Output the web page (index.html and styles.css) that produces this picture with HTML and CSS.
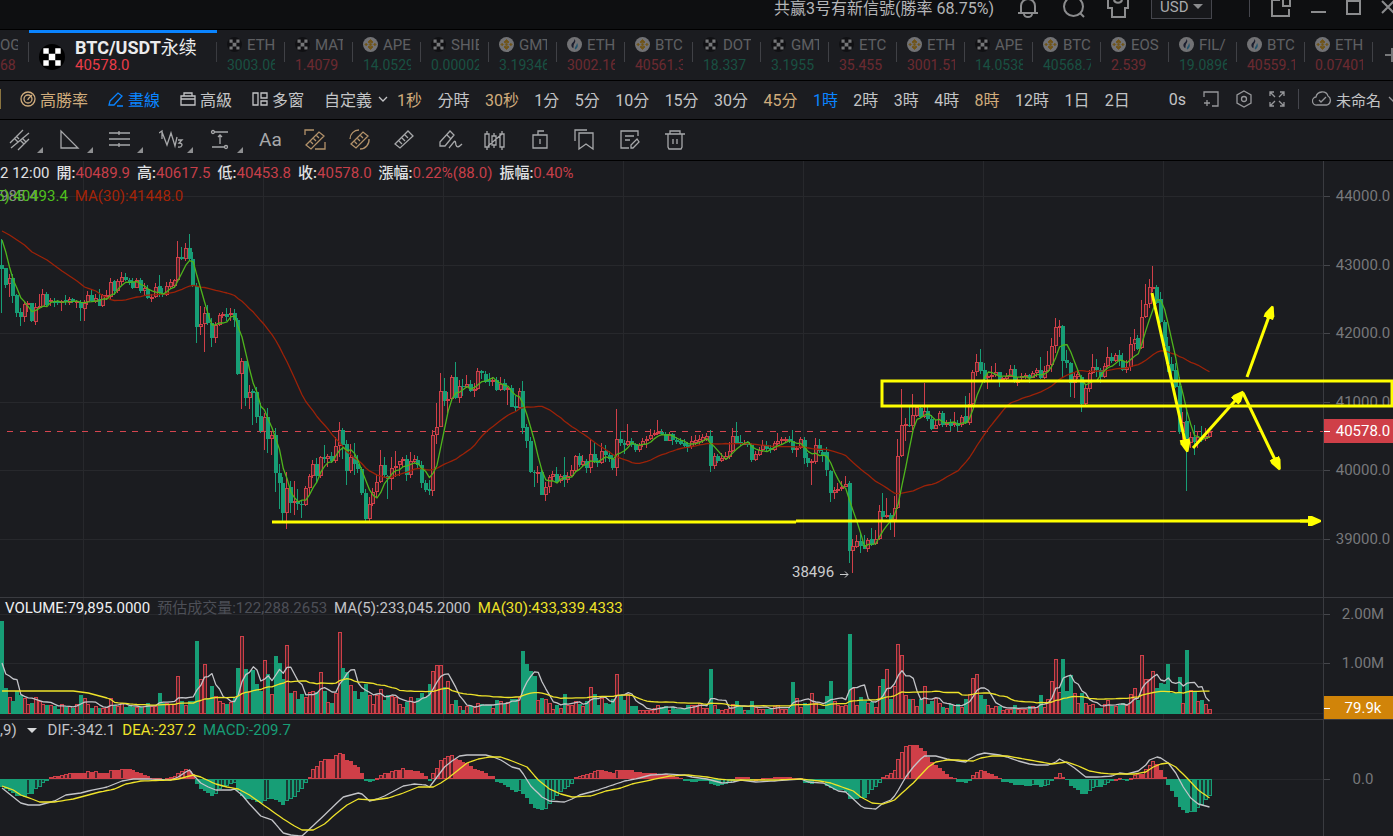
FILE: index.html
```html
<!DOCTYPE html>
<html lang="zh-Hant">
<head>
    <meta charset="UTF-8">
    <meta name="viewport" content="width=device-width, initial-scale=1.0">
    <title>BTC/USDT永续 40578.0</title>
    <link rel="stylesheet" href="styles.css">
</head>
<body>
    <!-- shared icons -->
    <svg class="sprite" aria-hidden="true">
        <symbol id="okx" viewBox="0 0 24 24">
            <circle cx="12" cy="12" r="12" fill="#000"/>
            <path d="M4 4h5v5H4zM15 4h5v5h-5zM9 9h6v6H9zM4 15h5v5H4zM15 15h5v5h-5z" fill="#fff"/>
        </symbol>
        <symbol id="bnb" viewBox="0 0 24 24">
            <circle cx="12" cy="12" r="12" fill="#f4f4f4"/>
            <path d="M12 4l4 4-2 2-2-2-2 2-2-2zM5 10l2 2-2 2-2-2zM19 10l2 2-2 2-2-2zM12 10l2 2-2 2-2-2zM8 16l2-2 2 2 2-2 2 2-4 4z" fill="#f0a90c" stroke="#f0a90c"/>
        </symbol>
        <symbol id="huobi" viewBox="0 0 24 24">
            <circle cx="12" cy="12" r="12" fill="#f4f4f4"/>
            <path d="M12 3c3 4 0 6-1 9-1 2 0 4-1 6-3-2-4-5-2-8 2-2 4-4 4-7z" fill="#1b2143"/>
            <path d="M16 9c2 4 2 8-3 11-2-4 3-6 3-11z" fill="#2ca6e0"/>
        </symbol>
    </svg>

    <header class="topbar">
        <span class="notice">共赢3号有新信號(勝率 68.75%)</span>
        <button class="icon-btn bell" aria-label="通知"><svg width="22" height="24" viewBox="0 0 22 24"><path d="M4 17v-6a7 7 0 0 1 14 0v6M1 18h20M7 19a4 3 0 0 0 8 0"/></svg></button>
        <button class="icon-btn search" aria-label="搜尋"><svg width="24" height="24" viewBox="0 0 24 24"><circle cx="11.500" cy="11.500" r="9.500"/><path d="M18 18l4 4"/></svg></button>
        <button class="icon-btn shirt" aria-label="主題"><svg width="24" height="24" viewBox="0 0 24 24"><path d="M2 4h6c0 5 8 5 8 0h6v9h-3v9H6v-9H2z"/></svg></button>
        <label class="currency"><select aria-label="貨幣"><option>USD</option></select></label>
        <span class="divider"></span>
        <button class="icon-btn popout" aria-label="彈出"><svg width="20" height="22" viewBox="0 0 20 22"><path d="M9 4H1v16h17v-7M12 3v7h7V3"/></svg></button>
        <button class="icon-btn min" aria-label="最小化"><svg width="16" height="20" viewBox="0 0 16 20"><path d="M0 15h15"/></svg></button>
        <button class="icon-btn max" aria-label="最大化"><svg width="16" height="20" viewBox="0 0 16 20"><path d="M1 4h13v13H1z"/></svg></button>
        <button class="icon-btn close" aria-label="關閉"><svg width="14" height="20" viewBox="0 0 14 20"><path d="M1 4l12 12M13 4L1 16"/></svg></button>
    </header>

    <nav class="tabs" id="tabs">
        <button class="tab tab-cut"><span class="tab-name">OG</span><span class="tab-price down">68</span></button>
        <button class="tab tab-active">
            <svg width="26" height="26"><use href="#okx"/></svg>
            <span class="pair"><b>BTC/USDT<i>永续</i></b><em>40578.0</em></span>
        </button>
        <!-- the other tabs are added by chart.js -->
    </nav>

    <div class="toolbar">
        <span class="edge"></span>
        <button class="tool gold"><svg width="16" height="16" viewBox="0 0 16 16"><circle cx="8" cy="8" r="7"/><circle cx="8" cy="8" r="4"/><path d="M8 8l4-4M8 8v1"/></svg>高勝率</button>
        <button class="tool blue"><svg width="16" height="16" viewBox="0 0 16 16"><path d="M2 10l8-8 4 3-8 9H1zM9 15h6"/></svg>畫線</button>
        <button class="tool"><svg width="16" height="16" viewBox="0 0 16 16"><path d="M1 5h14v9H1zM4 5V2h8v3M1 8h14"/></svg>高級</button>
        <button class="tool"><svg width="16" height="16" viewBox="0 0 16 16"><path d="M1 2h5v12H1zM9 2h6v5H9zM9 10h6v4H9z"/></svg>多窗</button>
        <button class="custom">自定義<svg width="10" height="6" viewBox="0 0 10 6"><path d="M1 1l4 4 4-4"/></svg></button>
        <div class="periods">
            <button class="gold">1秒</button><button>分時</button><button class="gold">30秒</button><button>1分</button><button>5分</button><button>10分</button><button>15分</button><button>30分</button><button class="gold">45分</button><button class="blue">1時</button><button>2時</button><button>3時</button><button>4時</button><button class="gold">8時</button><button>12時</button><button>1日</button><button>2日</button>
        </div>
        <div class="tools-right">
            <span>0s</span>
            <button aria-label="新增視窗"><svg width="16" height="16" viewBox="0 0 16 16"><path d="M1 6V1h14v14H9M4 9v6M1 12h6"/></svg></button>
            <button aria-label="設定"><svg width="16" height="18" viewBox="0 0 16 18"><path d="M8 1l7 4v8l-7 4-7-4V5z"/><circle cx="8" cy="9" r="2.500"/></svg></button>
            <button aria-label="全螢幕"><svg width="16" height="16" viewBox="0 0 16 16"><path d="M1 5V1h4M1 1l5 5M11 1h4v4M15 1l-5 5M1 11v4h4M1 15l5-5M11 15h4v-4M15 15l-5-5"/></svg></button>
            <span class="divider"></span>
            <button class="cloud"><svg width="20" height="16" viewBox="0 0 20 16"><path d="M5 14a4 4 0 0 1-1-8c1-6 10-7 12-1a5 5 0 0 1-1 9zM7 9l2 2 5-5"/></svg>未命名<svg class="more" width="10" height="6" viewBox="0 0 10 6"><path d="M1 1l4 4 4-4"/></svg></button>
        </div>
    </div>

    <div class="draw-tools">
        <button class="has-menu" aria-label="平行線"><svg width="22" height="22" viewBox="0 0 22 22"><path d="M1 14L14 1M2 19L20 4M9 21l11-11M5 9l4 4M7 7l3 3M11 11l4 4M13 9l4 4"/></svg></button>
        <button class="has-menu" aria-label="形狀"><svg width="22" height="22" viewBox="0 0 22 22"><path d="M2 2v17h17z"/></svg></button>
        <button class="has-menu" aria-label="水平線"><svg width="22" height="22" viewBox="0 0 22 22"><path d="M0 4h21M0 10h21M0 16h21M10 2v4M10 14v4"/></svg></button>
        <button class="has-menu" aria-label="波浪"><svg width="26" height="22" viewBox="0 0 26 22"><path d="M0 4l3-2v8M3 3l5 13 4-12 4 13 2-9M19 11h4l-3 3c5 0 3 5-1 4"/></svg></button>
        <button class="has-menu" aria-label="測量"><svg width="22" height="22" viewBox="0 0 22 22"><path d="M6 3h13M3 18h13M11 15V6M9 8l2-2 2 2"/><circle cx="4" cy="3" r="1.500"/><circle cx="17" cy="18" r="1.500"/></svg></button>
        <button class="text-tool">Aa</button>
        <button class="gold" aria-label="矩形量尺"><svg width="22" height="22" viewBox="0 0 22 22"><path d="M1 6V1h9M21 13v7H11M2 16L15 3l5 4L7 20zM6 12l3 3M9 9l3 3M12 6l3 3"/></svg></button>
        <button class="gold" aria-label="圓形量尺"><svg width="22" height="22" viewBox="0 0 22 22"><path d="M1 10a9 9 0 0 1 9-9M20 10a9 9 0 0 1-9 10M2 15L14 3l5 4L7 19zM5 12l3 3M8 9l3 3M11 6l3 3"/></svg></button>
        <button aria-label="量尺"><svg width="22" height="22" viewBox="0 0 22 22"><path d="M1 15L14 2l5 5L6 19zM5 12l3 3M8 9l3 3M11 6l3 3"/></svg></button>
        <button aria-label="畫筆"><svg width="24" height="22" viewBox="0 0 24 22"><path d="M1 13L11 2l4 4L6 17H1zM8 6l4 4M10 19c7-9 6-8 7-3 1 3 3 2 6-1"/></svg></button>
        <button aria-label="隱藏"><svg width="22" height="22" viewBox="0 0 22 22"><path d="M1 5h4v13H1zM8 7h4v9H8zM16 5h4v13h-4zM3 2v3M3 18v3M10 4v3M10 16v3M18 2v3M18 18v3M4 17L18 5"/></svg></button>
        <button aria-label="鎖定"><svg width="22" height="22" viewBox="0 0 22 22"><path d="M4 6h14v13H4zM9 6V2h6M11 10v5"/></svg></button>
        <button aria-label="書籤"><svg width="22" height="22" viewBox="0 0 22 22"><path d="M1 12V1h12M5 4h14v16l-7-5-7 5z"/></svg></button>
        <button aria-label="筆記"><svg width="22" height="22" viewBox="0 0 22 22"><path d="M19 7V2H2v17h8M6 7h9M6 11h5M12 19v-3l6-6 2 3-6 6z"/></svg></button>
        <button aria-label="刪除"><svg width="22" height="22" viewBox="0 0 22 22"><path d="M1 5h20M6 5V2h10v3M4 5v13l1 2h12l1-2V5M9 10v5M13 10v5"/></svg></button>
    </div>

    <main class="chart">
        <section class="panel price">
            <svg class="plot" id="price"></svg>
            <svg class="axis" id="price-axis"></svg>
            <div class="legend">
                <p><b>2 12:00</b><span><b>開:</b><i>40489.9</i></span><span><b>高:</b><i>40617.5</i></span><span><b>低:</b><i>40453.8</i></span><span><b>收:</b><i>40578.0</i></span><span><b>漲幅:</b><i>0.22%(88.0)</i></span><span><b>振幅:</b><i>0.40%</i></span></p>
            </div>
            <span class="ma-old">985.4</span>
            <div class="legend ma-line"><p><span class="ma5">5):40493.4</span><span class="ma30">MA(30):41448.0</span></p></div>
            <svg class="drawings">
                <defs>
                    <marker id="head" markerUnits="userSpaceOnUse" markerWidth="14" markerHeight="12" refX="11" refY="6" orient="auto"><path d="M0 1l4 0 9 4v2l-9 4h-4z" fill="#ff0"/></marker>
                </defs>
                <path d="M272 361h524M796 360h513" />
                <path d="M1300 360h19" marker-end="url(#head)"/>
                <rect x="882" y="220" width="510" height="25"/>
                <path d="M1152 132l35 157" marker-end="url(#head)"/>
                <path d="M1193 287l49-55" marker-end="url(#head)"/>
                <path d="M1243 232l36 75" marker-end="url(#head)"/>
                <path d="M1247 216l25-69" marker-end="url(#head)"/>
            </svg>
        </section>
        <section class="panel volume">
            <svg class="plot" id="volume"></svg>
            <svg class="axis" id="volume-axis"></svg>
            <div class="legend"><p><span class="strong">VOLUME:79,895.0000</span><span class="dim">预估成交量:122,288.2653</span><span class="grey">MA(5):233,045.2000</span><span class="yellow">MA(30):433,339.4333</span></p></div>
        </section>
        <section class="panel macd">
            <svg class="plot" id="macd"></svg>
            <svg class="axis" id="macd-axis"></svg>
            <div class="legend"><p><span class="grey">,9)</span><span class="caret"></span><span class="grey">DIF:-342.1</span><span class="yellow">DEA:-237.2</span><span class="green">MACD:-209.7</span></p></div>
        </section>
    </main>
    <script src="chart.js"></script>
</body>
</html>
```
FILE: styles.css
```css
* {
    box-sizing: border-box;
}

body {
    margin: 0;
    height: 100vh;
    display: flex;
    flex-direction: column;
    overflow: hidden;
    background: #1b1c20;
    color: #c3c4c6;
    font-family: Roboto, "Noto Sans CJK TC", sans-serif;
    font-size: 16px;
}

button {
    padding: 0;
    border: 0;
    background: none;
    color: inherit;
    font: inherit;
    white-space: nowrap;
    cursor: pointer;
}

svg {
    display: block;
    flex: none;
    fill: none;
    stroke: currentColor;
    stroke-width: 1.3;
}

i, em {
    font-style: normal;
}

.sprite {
    position: absolute;
    width: 0;
    height: 0;
}

use, symbol {
    stroke: none;
}

.gold { color: #d0ac7c; }
.blue { color: #0a84ff; }

/* window bar */
.topbar {
    flex: none;
    display: flex;
    align-items: center;
    height: 45px;
    margin-top: -15px;
    padding-bottom: 1px;
    background: #0e0f11;
    border-bottom: 1px solid #000;
    color: #b4b5b7;
}

.notice {
    margin-left: auto;
}

.topbar svg {
    stroke: #8b8c8e;
    stroke-width: 2;
}

.bell { margin-left: 23px; }
.search { margin-left: 23px; }
.shirt { margin-left: 20px; }

.currency {
    position: relative;
    margin: 0 37px 0 21px;
}

.currency select {
    width: 61px;
    height: 25px;
    padding: 0 0 0 8px;
    appearance: none;
    border: 1px solid #45464d;
    border-radius: 0;
    background: #17181b;
    color: #a9aaac;
    font: 15px Roboto, sans-serif;
}

.currency::after {
    content: "";
    position: absolute;
    right: 9px;
    top: 10px;
    border: 5px solid transparent;
    border-top-color: #8b8c8e;
    border-bottom: 0;
}

.divider {
    width: 1px;
    height: 20px;
    background: #45464d;
}

.popout { margin-left: 21px; }
.min { margin-left: 20px; }
.max { margin-left: 19px; }
.close { margin: 0 -2px 0 19px; }

/* symbol tabs */
.tabs {
    flex: none;
    display: flex;
    height: 51px;
    border-bottom: 1px solid #000;
    overflow: hidden;
}

.tab {
    position: relative;
    flex: none;
    width: 68px;
    padding: 0 10px 1px;
    text-align: left;
    opacity: 0.4;
}

.tab::after {
    content: "";
    position: absolute;
    right: 0;
    top: 12px;
    width: 1px;
    height: 20px;
    background: #77787f;
}

.tab-name {
    display: flex;
    align-items: center;
    gap: 5px;
    width: 48px;
    height: 20px;
    overflow: hidden;
    font-size: 15px;
    line-height: 20px;
}

.tab-price {
    display: block;
    width: 48px;
    height: 20px;
    overflow: hidden;
    font-size: 14px;
    line-height: 20px;
}

.up { color: #179e76; }
.down { color: #e0404b; }

.tab-cut {
    width: 29px;
    padding-left: 0;
}

.tab-cut .tab-name {
    width: 18px;
}

.tab-active {
    display: flex;
    align-items: center;
    gap: 10px;
    width: 188px;
    padding: 0 10px 0 10px;
    border-top: 3px solid #0a84ff;
    opacity: 1;
}

.tab-active::after {
    top: 9px;
    background: #3a3b40;
}

.pair {
    padding-bottom: 6px;
}

.pair b {
    display: block;
    color: #ececed;
    font-size: 18px;
    line-height: 20px;
}

.pair i {
    font-family: "Noto Sans CJK SC", sans-serif;
    font-weight: 400;
}

.pair em {
    display: block;
    color: #ea3d48;
    font-size: 15px;
    line-height: 14px;
}

.add {
    flex: none;
    margin-left: 12px;
    color: #77787a;
}

.add svg {
    stroke-width: 2;
}

/* period toolbar */
.toolbar {
    flex: none;
    display: flex;
    align-items: center;
    height: 39px;
    padding-bottom: 2px;
    border-bottom: 1px solid #000;
    overflow: hidden;
}

.edge {
    width: 1px;
    height: 20px;
    margin-right: 19px;
    background: #8a7440;
}

.tool {
    display: flex;
    align-items: center;
    gap: 4px;
    margin-right: 20px;
}

.custom {
    display: flex;
    align-items: center;
    gap: 6px;
    margin-right: 9px;
}

.periods {
    flex: none;
    display: flex;
    justify-content: space-between;
    width: 733px;
}

.tools-right {
    flex: none;
    display: flex;
    align-items: center;
    gap: 17px;
    margin: 0 -5px 0 auto;
}

.tools-right .divider {
    margin: 0 -4px;
}

.tools-right svg {
    stroke: #96979a;
}

.cloud {
    display: flex;
    align-items: center;
    gap: 4px;
    font-size: 15px;
}

.cloud .more {
    margin-left: 3px;
}

/* drawing tools */
.draw-tools {
    flex: none;
    display: flex;
    align-items: center;
    gap: 23px;
    height: 41px;
    padding: 0 0 1px 9px;
    border-bottom: 1px solid #000;
    color: #a7a8aa;
}

.draw-tools button {
    flex: none;
    width: 22px;
}

.draw-tools .gold {
    color: #b3926a;
}

.draw-tools .has-menu {
    position: relative;
    margin-right: 5px;
}

.has-menu::after {
    content: "";
    position: absolute;
    left: 28px;
    bottom: -2px;
    border-left: 6px solid transparent;
    border-bottom: 6px solid #8d8e90;
}

.text-tool {
    font-size: 19px;
}

/* chart */
.chart {
    flex: 1;
    display: grid;
    grid-template-rows: 436px 122px 1fr;
    min-height: 0;
}

.panel {
    position: relative;
    display: grid;
    grid-template-columns: 1fr 70px;
    min-height: 0;
    overflow: hidden;
}

.volume, .macd {
    border-top: 1px solid #3a3b40;
}

.plot, .axis {
    width: 100%;
    height: 100%;
    stroke: none;
    overflow: hidden;
}

.axis {
    border-left: 1px solid #3a3b40;
    font-size: 15px;
}

.axis text { fill: #77787b; }
.axis .tag-text { fill: #fff; }
.grid-line { stroke: #27282c; stroke-width: 1; shape-rendering: crispEdges; }
.tick { stroke: #45464b; stroke-width: 1; shape-rendering: crispEdges; }
.tag-tick { stroke: #fff; stroke-width: 1; shape-rendering: crispEdges; }
.last-line { stroke: #d5454f; stroke-width: 1; stroke-dasharray: 6 6.5; shape-rendering: crispEdges; }
.bar-up { fill: #4c242a; stroke: #cf3f48; stroke-width: 1; shape-rendering: crispEdges; }
.bar-up-solid { fill: #cf3f48; shape-rendering: crispEdges; }
.bar-down { fill: #179e76; shape-rendering: crispEdges; }
.bar-down-hollow { fill: #1b3b35; stroke: #179e76; stroke-width: 1; shape-rendering: crispEdges; }
.line { fill: none; stroke-width: 1.3; stroke-linejoin: round; }
.line-ma5 { stroke: #4fb51d; }
.line-ma30 { stroke: #9c2208; }
.line-grey { stroke: #c3c4c8; }
.line-yellow { stroke: #efe32a; }
.low-mark { fill: #cbccce; font-size: 15px; }
.low-arrow { stroke: #cbccce; stroke-width: 1; fill: none; }

.drawings {
    position: absolute;
    inset: 0;
    width: 100%;
    height: 100%;
    stroke: #ff0;
    stroke-width: 3;
}

.drawings path, .drawings rect {
    transform: translateY(0);
}

.drawings marker path {
    stroke: none;
}

.legend {
    position: absolute;
    left: 0;
    top: 1px;
    font-size: 15px;
    line-height: 22px;
    white-space: nowrap;
}

.legend p {
    display: flex;
    gap: 7px;
    margin: 0;
}

.legend b {
    color: #e0e1e3;
    font-weight: 400;
}

.legend span b {
    font-weight: 500;
}

.legend i {
    color: #c63f49;
}

.ma-line {
    top: 24px;
    left: -4px;
}

.ma-old {
    position: absolute;
    left: 0;
    top: 24px;
    color: #8c8d90;
    font-size: 15px;
    line-height: 22px;
}

.ma5 { color: #4fc01d; }
.ma30 { color: #a52407; }

.volume .legend { left: 5px; top: -1px; }
.macd .legend { top: -1px; }
.strong { color: #eeeff1; }
.grey { color: #c3c4c8; }
.dim { color: #4d4f57; font-family: Roboto, "Noto Sans CJK SC", sans-serif; }
.legend .yellow { color: #efe32a; }
.green { color: #179e76; }

.caret {
    align-self: center;
    margin: 0 4px 0 3px;
    border: 5px solid transparent;
    border-top-color: #d6d7d9;
    border-bottom: 0;
}
```
FILE: chart.js
```js
// [name, price, direction, exchange]
const tabs = [
    ['ETH', '3003.06', 'up', 'okx'], ['MAT', '1.4079', 'down', 'okx'], ['APE', '14.0529', 'up', 'bnb'],
    ['SHIB', '0.00002', 'up', 'okx'], ['GMT', '3.19346', 'up', 'bnb'], ['ETH', '3002.16', 'down', 'huobi'],
    ['BTC', '40561.3', 'down', 'bnb'], ['DOT', '18.337', 'up', 'okx'], ['GMT', '3.1955', 'up', 'okx'],
    ['ETC', '35.455', 'down', 'okx'], ['ETH', '3001.51', 'down', 'bnb'], ['APE', '14.0538', 'up', 'okx'],
    ['BTC', '40568.7', 'up', 'bnb'], ['EOS', '2.539', 'down', 'bnb'], ['FIL/', '19.0896', 'up', 'huobi'],
    ['BTC', '40559.1', 'down', 'huobi'], ['ETH', '0.07401', 'down', 'bnb']
];

document.getElementById('tabs').insertAdjacentHTML('beforeend', tabs.map(([name, price, dir, icon]) =>
    `<button class="tab"><span class="tab-name"><svg width="15" height="15"><use href="#${icon}"/></svg>${name}</span><span class="tab-price ${dir}">${price}</span></button>`
).join('') + '<button class="add" aria-label="+"><svg width="14" height="50" viewBox="0 0 14 50"><path d="M0 25h14M7 18v14"/></svg></button>');

// one candle per item: direction, high, body top, body bottom, low
const candles = `
g239 265 269 313,g268 268 285 288,r274 278 284 297,g274 278 296 303,g294 295 313 317,g308 312 317 326,r302 304 317 322,r301 303 305 312,g303 303 321 322,r303 307 322 325,
r294 306 307 308,r289 294 307 307,g292 294 305 307,r298 300 302 306,g298 301 303 307,g300 301 303 305,r300 301 303 311,g295 300 302 305,r297 299 303 305,g298 299 302 303,
r300 301 302 308,g300 302 308 321,r300 303 309 321,r291 295 302 305,g290 295 301 302,r294 298 302 303,g289 299 306 306,r294 295 306 307,r290 295 297 300,r278 282 297 299,
g280 281 291 295,r279 281 291 293,r272 277 282 285,g273 277 280 281,g278 280 283 285,g278 282 288 289,r278 280 288 288,g278 280 291 293,r283 288 291 296,g285 289 298 299,
r294 297 298 302,r283 287 297 298,g275 286 293 297,g288 293 295 297,r282 286 295 296,r279 282 287 289,r279 280 286 287,r241 257 280 282,g247 257 259 260,r243 248 259 261,
g234 248 259 261,g252 259 286 287,g283 286 327 343,r306 324 327 335,r307 313 324 352,g305 313 323 325,g318 323 338 347,r322 325 338 343,r313 315 325 326,r312 314 315 318,
g308 314 317 321,r308 313 315 321,g309 313 320 327,g318 320 374 375,r358 361 374 409,g361 361 398 406,r385 392 398 409,g389 391 393 425,g387 392 417 423,g403 416 431 433,
r413 417 432 450,g408 417 439 453,r432 435 439 455,g428 435 473 492,g464 473 483 509,g477 483 513 521,r472 488 513 529,g481 487 503 513,r481 501 503 515,g489 502 504 510,
g500 504 505 518,r486 488 505 506,r474 476 488 495,r460 464 476 478,g458 464 476 483,r456 457 476 478,g445 457 459 463,r454 456 459 467,g452 456 461 463,r437 446 461 463,
r422 430 446 457,g428 430 445 459,g440 444 471 485,r444 457 471 473,g443 457 464 475,g455 464 469 473,g467 469 493 495,g489 493 519 521,r497 504 519 521,r488 492 504 506,
r474 482 492 498,r450 465 482 483,g457 465 475 477,g475 476 479 499,r457 468 479 490,r451 466 468 477,r461 461 465 476,r457 459 461 467,g455 459 475 481,r452 461 475 478,
r455 459 462 463,g456 460 465 468,g461 465 483 488,g480 483 490 492,g480 489 491 495,r430 435 491 496,r403 427 435 444,r373 391 427 427,g378 391 401 406,r392 399 401 413,
r375 377 399 400,g362 377 398 399,r380 386 398 403,g379 386 387 396,r375 384 387 388,g380 384 391 392,r383 389 391 397,r368 371 389 390,g370 371 373 379,g371 374 382 383,
g373 380 382 386,r377 380 382 386,g377 380 390 391,r377 384 390 391,g379 383 390 391,r387 388 390 405,g385 388 407 407,g396 406 408 411,r388 391 408 409,g381 391 428 434,
g424 427 441 448,g437 441 472 473,g470 472 473 487,r466 472 473 483,g469 472 495 495,r482 487 495 501,r475 477 487 493,r471 474 477 481,g467 474 482 483,r474 476 481 483,
g457 475 480 487,r472 476 480 483,r465 470 476 477,r455 456 471 472,g453 456 465 467,r455 461 465 467,g459 461 468 473,r439 454 468 473,g443 454 461 463,g458 461 463 467,
r443 451 463 464,g445 451 455 462,g451 455 459 462,g455 459 468 470,r409 439 468 476,g431 439 443 446,g440 443 445 454,r424 441 445 446,g438 441 445 447,g443 444 450 452,
r443 445 450 452,r438 441 445 447,r436 439 441 448,r429 435 439 440,r430 433 435 436,r420 432 433 435,g429 432 434 435,g432 434 441 441,r432 434 441 441,g433 434 440 445,
g437 440 442 444,g438 441 444 445,g439 443 446 447,g442 445 447 452,r436 441 447 449,r435 440 443 445,r435 439 442 445,r434 437 441 443,r433 436 440 441,g430 436 466 472,
r453 456 466 469,g454 456 461 463,r453 458 461 462,r452 456 459 460,r442 451 457 459,r428 436 451 452,g422 436 443 443,g435 442 443 446,r440 443 444 445,g441 442 445 447,
g443 445 460 462,r451 454 460 461,r447 450 455 456,r440 445 450 452,g441 445 449 451,g445 448 450 453,r441 443 450 451,r433 441 444 445,r437 439 441 445,r437 439 441 443,
g436 439 441 443,g430 441 450 453,r446 448 450 457,r437 439 448 449,g437 440 458 464,g453 458 463 467,r459 461 463 485,r438 445 462 464,g439 445 451 453,g450 452 456 462,
g447 452 470 476,g470 471 493 502,r487 490 493 499,r483 489 491 493,r481 487 489 491,r476 484 487 487,g481 483 551 563,r539 546 551 573,r535 541 547 548,g533 541 546 553,
g535 545 549 549,r538 540 549 552,g528 539 545 546,r530 539 544 545,r505 511 539 540,g493 511 517 520,r498 515 517 518,g513 515 522 530,r496 508 520 537,r439 456 508 509,
r389 425 456 457,r418 424 426 441,g407 425 426 427,r394 415 426 430,r406 407 416 417,g407 408 417 418,r383 411 417 418,g407 411 419 421,g415 419 429 430,r420 425 429 429,
r411 413 425 426,g411 413 425 427,r420 423 425 427,g419 423 426 431,r412 423 425 427,g420 423 426 431,r415 417 425 427,g396 416 423 424,r393 404 423 425,r370 372 404 407,
r354 362 372 376,g349 362 371 374,g363 370 379 383,r373 376 378 389,r366 375 377 380,r363 372 375 377,g372 372 380 387,r377 378 380 382,r373 376 379 381,r365 369 377 377,
g365 369 382 383,r377 381 383 386,r373 376 378 380,r373 375 377 379,g374 375 378 383,r371 373 378 378,r368 370 373 377,g357 370 378 379,r366 371 378 379,r351 365 371 372,
r338 346 365 372,r318 327 346 353,r320 326 327 337,g325 326 361 378,g350 360 363 368,g362 363 383 397,r373 376 383 398,r370 374 377 379,g375 377 404 412,r385 388 404 405,
r370 373 389 392,r354 367 373 374,g359 367 370 377,g368 370 377 383,r363 366 377 378,r347 357 366 367,g353 357 361 363,r353 355 361 362,g350 355 361 366,g353 361 370 371,
r360 367 370 373,r337 344 367 371,r329 339 344 351,g335 338 349 350,r300 317 348 349,r284 304 317 318,r279 287 304 308,r266 287 288 292,g285 287 303 304,g292 299 322 323,
g320 322 346 348,g337 346 364 372,g357 364 371 380,g363 370 387 388,g377 386 432 434,r412 422 432 440,g410 421 445 491,r432 437 443 448,g425 437 442 455,r432 437 442 448,
g426 437 438 442,r428 436 439 441,r429 432 437 438`.trim().split(/,\s*/).map(s => [s[0] === 'r', ...s.slice(1).split(' ').map(Number)]);

const volumes = `
93 26 17 13 23 19 16 10 11 17 13 10 9 9 8 5 10 7 8 6 10 19 16 10 6 8 6 6 7 16
9 8 11 7 8 7 7 7 8 11 8 8 21 11 11 10 10 38 13 9 13 13 73 35 50 16 28 18 13 11
10 12 16 46 78 45 23 44 30 23 54 40 20 58 51 35 69 21 23 15 20 17 22 23 22 42 23 12 11 21
82 46 42 29 23 15 22 30 19 10 19 25 14 19 18 17 10 7 12 17 12 16 21 17 30 43 49 49 27 33
10 14 8 4 8 8 7 11 10 9 9 6 14 13 10 12 15 15 17 63 50 43 38 14 16 15 11 5 9 6
20 9 9 13 10 8 13 27 20 9 16 11 10 15 40 18 14 20 8 8 4 4 4 4 6 9 7 8 4 7
5 5 5 9 9 9 11 6 6 45 9 5 4 5 6 10 13 7 4 4 13 7 5 5 5 5 8 9 5 5
6 32 16 7 11 10 21 11 5 5 18 33 13 9 8 9 80 26 9 17 13 11 12 7 28 35 45 15 28 70
59 19 15 15 8 15 28 10 13 16 11 7 6 10 9 10 7 15 20 36 40 19 15 9 6 8 8 4 5 5
9 5 5 5 8 8 7 19 7 15 33 55 22 55 23 39 21 11 21 11 9 10 6 6 10 14 8 8 9 11
9 20 26 14 59 35 35 43 26 31 30 50 21 21 37 11 64 24 22 13 14 10 5`.trim().split(/\s+/).map(Number);

// index:value pairs, the points between them are interpolated
const hist = '0:-8 2:-12 4:-17 6:-18 7:-15 8:-15 9:-10 10:-8 11:-4 12:-2 13:2 16:4 18:6 22:6 23:8 24:7 25:8 26:6 28:6 29:9 31:9 32:10 34:10 35:9 36:7 38:4 40:1 42:1 43:-1 44:1 46:3 47:6 49:10 50:8 51:5 52:-5 53:-10 54:-12 56:-17 57:-15 58:-10 60:-7 62:-4 63:-12 64:-17 65:-20 66:-20 69:-24 71:-20 73:-21 75:-26 76:-22 78:-18 79:-13 80:-10 81:-4 82:2 83:10 84:13 85:18 86:20 88:20 89:24 90:26 91:25 92:19 93:18 94:14 95:12 96:6 97:-2 98:-3 99:-2 100:1 102:6 103:6 104:8 106:9 107:11 108:9 111:8 113:3 114:-2 115:6 116:11 117:19 119:23 120:24 121:20 124:16 126:10 128:8 130:3 131:3 132:-3 134:-6 137:-13 138:-12 139:-15 140:-19 141:-25 142:-29 144:-31 145:-30 146:-25 149:-13 152:-5 153:2 157:6 158:8 160:9 162:7 163:6 164:9 168:9 169:7 176:5 178:4 181:1 182:-2 184:-3 188:-2 189:-5 191:-7 194:-4 195:-1 196:2 199:2 200:-1 203:1 208:2 213:1 214:-4 216:-5 217:-2 219:-2 220:-7 222:-11 224:-11 225:-13 226:-20 228:-20 230:-19 234:-4 235:2 237:6 238:9 239:20 240:27 241:33 242:34 244:34 246:28 247:22 248:17 251:8 253:2 254:1 255:-3 257:-4 258:-2 259:4 261:9 262:8 266:1 267:-3 269:-4 270:-6 274:-7 276:-6 277:-8 279:-6 280:-2 281:2 282:6 283:2 284:-1 285:-7 287:-11 288:-15 289:-15 291:-9 293:-8 296:-2 298:1 299:-1 300:-2 301:1 302:4 304:5 305:10 307:18 308:15 309:9 310:2 311:-6 313:-18 314:-28 316:-34 318:-33 320:-26 322:-17';
const dif = '0:788 5:803 7:805 10:805 14:801 17:795 21:793 23:791 28:787 32:781 35:779 39:779 45:780 47:777 49:772 50:770 51:775 53:783 55:787 57:790 61:790 62:789 64:795 66:804 69:816 72:820 75:833 77:835 80:836 82:829 86:815 89:804 91:797 95:793 96:794 98:801 100:799 102:796 105:790 107:786 110:784 113:785 114:787 116:777 118:767 120:761 122:756 124:755 129:755 131:757 133:760 136:767 138:769 139:774 141:786 144:797 146:801 150:802 152:799 154:795 158:791 162:786 166:781 170:778 173:775 177:774 182:775 184:777 188:779 190:781 192:783 195:782 197:780 201:782 206:781 213:779 215:782 219:783 221:787 223:791 225:792 227:799 229:806 230:808 233:809 235:803 237:800 238:796 239:790 241:777 243:767 245:759 246:756 249:756 252:759 255:761 257:762 258:759 260:755 262:753 266:755 268:757 271:761 274:764 276:765 279:765 281:762 282:759 284:763 286:768 289:777 292:777 296:776 298:773 300:774 303:771 305:765 306:760 308:757 309:758 311:763 313:773 315:787 317:798 319:804 322:807';
const dea = '0:786 3:790 5:795 8:799 10:802 14:802 19:799 26:792 30:789 33:784 37:781 45:780 47:779 49:777 51:775 53:777 57:784 60:787 63:789 66:795 69:803 72:811 75:819 78:826 80:830 83:830 86:824 89:814 92:805 95:799 99:800 103:798 107:793 111:787 115:787 117:783 119:778 121:772 124:763 127:759 130:757 133:757 136:761 140:767 143:780 146:789 149:794 152:797 157:796 161:791 165:788 168:784 173:780 178:776 183:775 188:777 191:779 194:780 206:780 213:779 218:781 221:783 224:787 227:791 229:797 232:803 235:804 238:800 240:793 243:783 247:767 249:762 252:760 255:760 259:761 261:758 264:756 268:756 271:758 274:760 277:762 280:764 284:762 287:766 290:771 293:773 296:774 302:774 305:772 307:767 309:764 311:763 313:767 316:778 319:790 322:798';

const PITCH = 3.75;
const PRICE_TOP = 161;
const VOLUME_TOP = 598;
const MACD_TOP = 720;
const gridX = [83, 263, 443, 623, 803, 983, 1163];

const xAt = i => 2 + i * PITCH;

function spread(text) {
    const points = text.split(' ').map(p => p.split(':').map(Number));
    const out = [];
    for (let k = 0; k < points.length - 1; k++) {
        const [a, va] = points[k];
        const [b, vb] = points[k + 1];
        for (let i = a; i < b; i++) out.push(va + (vb - va) * (i - a) / (b - a));
    }
    out.push(points[points.length - 1][1]);
    return out;
}

// moving average, with the values before the window is full given by hand
function average(values, n, first) {
    return values.map((v, i) => {
        if (i < n - 1) return first[i];
        let sum = 0;
        for (let k = i - n + 1; k <= i; k++) sum += values[k];
        return sum / n;
    });
}

function line(values, cls) {
    return `<polyline class="line ${cls}" points="${values.map((v, i) => xAt(i).toFixed(1) + ',' + v.toFixed(1)).join(' ')}"/>`;
}

// neighbouring boxes share an edge where the pitch rounds down
function box(i, y, h, cls) {
    const left = Math.round(xAt(i) - PITCH / 2);
    if (cls === 'bar-up' || cls === 'bar-down-hollow') {
        return `<rect class="${cls}" x="${left + 0.5}" y="${y + 0.5}" width="3" height="${Math.max(h - 1, 1)}"/>`;
    }
    return `<rect class="${cls}" x="${left}" y="${y}" width="4" height="${Math.max(h, 1)}"/>`;
}

function grid(ys) {
    return gridX.map(x => `<line class="grid-line" x1="${x}.5" x2="${x}.5" y1="0" y2="900"/>`).join('') +
        ys.map(y => `<line class="grid-line" x1="0" x2="100%" y1="${y}.5" y2="${y}.5"/>`).join('');
}

function draw(id, top, html) {
    document.getElementById(id).innerHTML = `<g transform="translate(0 ${-top})">${html}</g>`;
}

function axis(id, top, labels, tag) {
    draw(id, top, labels.map(([y, text]) =>
        `<line class="tick" x1="0" x2="6" y1="${y}.5" y2="${y}.5"/><text x="39" y="${y + 5}" text-anchor="middle">${text}</text>`).join('') +
        (tag ? `<rect x="-1" y="${tag.y - tag.h / 2}" width="71" height="${tag.h}" fill="${tag.color}"/><line class="tag-tick" x1="0" x2="6" y1="${tag.y}.5" y2="${tag.y}.5"/><text class="tag-text" x="39" y="${tag.y + 5}" text-anchor="middle">${tag.text}</text>` : ''));
}

// price
const closes = candles.map(c => c[0] ? c[2] : c[3]);
const ma5 = average(closes, 5, [240, 252, 267, 280]);
const ma30 = average(closes, 30, spread('0:231 2:235 6:245 8:252 12:260 16:271 20:281 22:287 25:291 27:296 29:299'));
draw('price', PRICE_TOP, grid([196, 265, 333, 402, 470, 539]) +
    '<line class="last-line" x1="7" x2="100%" y1="431.5" y2="431.5"/>' +
    candles.map(([up, high, top, bottom, low], i) => {
        const wick = `<rect class="${up ? 'bar-up-solid' : 'bar-down'}" x="${Math.round(xAt(i) - PITCH / 2) + 1}" y="${high}" width="1" height="${low - high}"/>`;
        return wick + box(i, top, bottom - top, up ? 'bar-up' : 'bar-down');
    }).join('') +
    line(ma30, 'line-ma30') + line(ma5, 'line-ma5') +
    '<text class="low-mark" x="792" y="577">38496</text><path class="low-arrow" d="M840 574.500h8M845 571.500l3 3-3 3"/>');
axis('price-axis', PRICE_TOP, [[196, '44000.0'], [265, '43000.0'], [333, '42000.0'], [402, '41000.0'], [470, '40000.0'], [539, '39000.0']],
    { y: 431, h: 24, color: '#cf3f48', text: '40578.0' });

// volume
const BASE = 714;
draw('volume', VOLUME_TOP, grid([614, 663, 713]) +
    volumes.map((v, i) => box(i, BASE - v, v, candles[i][0] ? 'bar-up' : 'bar-down')).join('') +
    line(average(volumes, 5, [51, 40, 38, 35]).map(v => BASE - v), 'line-grey') +
    line(average(volumes, 30, spread('0:23 19:23 23:21 27:17 29:15')).map(v => BASE - v), 'line-yellow'));
axis('volume-axis', VOLUME_TOP, [[614, '2.00M'], [663, '1.00M']],
    { y: 708, h: 24, color: '#d18409', text: '79.9k' });

// macd
const ZERO = 779;
const bars = spread(hist).map(Math.round);
draw('macd', MACD_TOP, grid([ZERO]) +
    bars.map((v, i) => {
        const growing = i > 0 && v > bars[i - 1];
        if (v >= 0) return box(i, ZERO - v, v, growing ? 'bar-up' : 'bar-up-solid');
        return box(i, ZERO, -v, growing ? 'bar-down-hollow' : 'bar-down');
    }).join('') +
    line(spread(dif), 'line-grey') + line(spread(dea), 'line-yellow'));
axis('macd-axis', MACD_TOP, [[779, '0.0']]);
```
